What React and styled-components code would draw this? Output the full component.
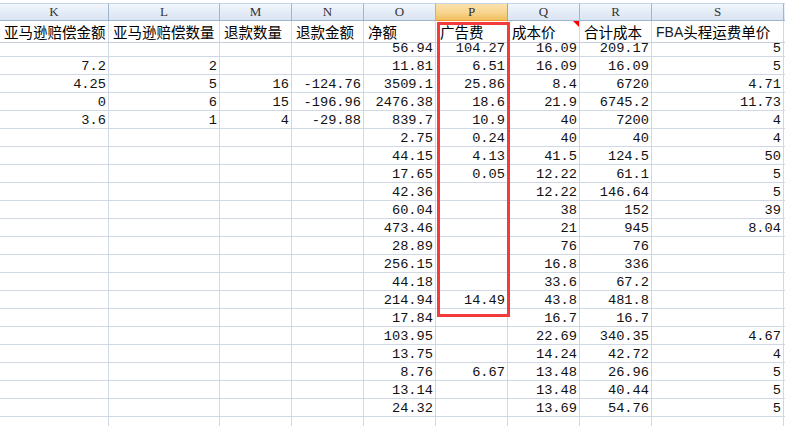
import React from 'react';
import styled, { createGlobalStyle } from 'styled-components';

const GlobalStyle = createGlobalStyle`
  html, body {
    margin: 0;
    padding: 0;
    background: #ffffff;
    overflow: hidden;
  }
`;

const COLS = '109px 111px 72px 72px 72px 72px 72px 72px 132px 10px';

const Wrap = styled.div`
  position: relative;
  width: 785px;
  height: 426px;
  padding-top: 3px;
  box-sizing: border-box;
  overflow: hidden;
  background: #ffffff;
`;

const Grid = styled.div`
  display: grid;
  grid-template-columns: ${COLS};
  grid-auto-rows: 18px;
  width: 794px;
`;

const ColHead = styled.div`
  box-sizing: border-box;
  height: 18px;
  border-top: 1px solid #c5d3e6;
  border-right: 1px solid ${p => (p.active ? '#f29436' : '#9eb6ce')};
  border-bottom: 1px solid ${p => (p.active ? '#f29436' : '#9eb6ce')};
  background: ${p =>
    p.active
      ? 'linear-gradient(#fbe3ab, #f8d592 50%, #f1c15f)'
      : 'linear-gradient(#f3f7fc, #e4ecf7 50%, #dbe4f1)'};
  display: flex;
  align-items: center;
  justify-content: center;
  font-family: "Liberation Serif", serif;
  font-size: 13px;
  color: #333;
`;

const TitleCell = styled.div`
  position: relative;
  box-sizing: border-box;
  height: 22px;
  border-right: 1px solid #d0d7e5;
  border-bottom: 1px solid #c9cfd9;
  display: flex;
  align-items: flex-end;
  padding: 0 0 1px 4px;
  white-space: nowrap;
  overflow: visible;
  font-family: "Noto Sans CJK SC", sans-serif;
  font-size: 14.5px;
  line-height: 18px;
  color: #000;
`;

const Latin = styled.span`
  font-family: "Liberation Sans", Arial, sans-serif;
  font-size: 14px;
  color: #1a1a1a;
`;

const Cell = styled.div`
  box-sizing: border-box;
  height: 18px;
  border-right: 1px solid #d0d7e5;
  border-bottom: 1px solid #d0d7e5;
  padding: 3px 2px 0 0;
  text-align: right;
  white-space: nowrap;
  font-family: "Liberation Mono", monospace;
  font-size: 13.7px;
  line-height: 14px;
  color: #111;
`;

const CommentMark = styled.span`
  position: absolute;
  top: 0;
  right: 0;
  width: 0;
  height: 0;
  border-top: 6px solid #ff0000;
  border-left: 6px solid transparent;
`;

const Highlight = styled.div`
  position: absolute;
  left: 437px;
  top: 22px;
  width: 73px;
  height: 295px;
  box-sizing: border-box;
  border: 3px solid #f43b3b;
  pointer-events: none;
`;

const letters = ['K', 'L', 'M', 'N', 'O', 'P', 'Q', 'R', 'S', ''];

const titles = [
  '亚马逊赔偿金额',
  '亚马逊赔偿数量',
  '退款数量',
  '退款金额',
  '净额',
  '广告费',
  '成本价',
  '合计成本',
  'FBA',
  '',
];

const rows = [
  ['', '', '', '', '56.94', '104.27', '16.09', '209.17', '5'],
  ['7.2', '2', '', '', '11.81', '6.51', '16.09', '16.09', '5'],
  ['4.25', '5', '16', '-124.76', '3509.1', '25.86', '8.4', '6720', '4.71'],
  ['0', '6', '15', '-196.96', '2476.38', '18.6', '21.9', '6745.2', '11.73'],
  ['3.6', '1', '4', '-29.88', '839.7', '10.9', '40', '7200', '4'],
  ['', '', '', '', '2.75', '0.24', '40', '40', '4'],
  ['', '', '', '', '44.15', '4.13', '41.5', '124.5', '50'],
  ['', '', '', '', '17.65', '0.05', '12.22', '61.1', '5'],
  ['', '', '', '', '42.36', '', '12.22', '146.64', '5'],
  ['', '', '', '', '60.04', '', '38', '152', '39'],
  ['', '', '', '', '473.46', '', '21', '945', '8.04'],
  ['', '', '', '', '28.89', '', '76', '76', ''],
  ['', '', '', '', '256.15', '', '16.8', '336', ''],
  ['', '', '', '', '44.18', '', '33.6', '67.2', ''],
  ['', '', '', '', '214.94', '14.49', '43.8', '481.8', ''],
  ['', '', '', '', '17.84', '', '16.7', '16.7', ''],
  ['', '', '', '', '103.95', '', '22.69', '340.35', '4.67'],
  ['', '', '', '', '13.75', '', '14.24', '42.72', '4'],
  ['', '', '', '', '8.76', '6.67', '13.48', '26.96', '5'],
  ['', '', '', '', '13.14', '', '13.48', '40.44', '5'],
  ['', '', '', '', '24.32', '', '13.69', '54.76', '5'],
  ['', '', '', '', '', '', '', '', ''],
];

export default function App() {
  return (
    <>
      <GlobalStyle />
      <Wrap>
        <Grid>
          {letters.map((l, i) => (
            <ColHead key={'h' + i} active={l === 'P'}>{l}</ColHead>
          ))}
          {titles.map((t, i) => (
            <TitleCell key={'t' + i}>
              {t === 'FBA' ? (
                <>
                  <Latin>FBA</Latin>头程运费单价
                </>
              ) : (
                t
              )}
              {t === '成本价' && <CommentMark />}
            </TitleCell>
          ))}
          {rows.map((r, ri) =>
            [...r, ''].map((v, ci) => <Cell key={ri + '-' + ci}>{v}</Cell>)
          )}
        </Grid>
        <Highlight />
      </Wrap>
    </>
  );
}
